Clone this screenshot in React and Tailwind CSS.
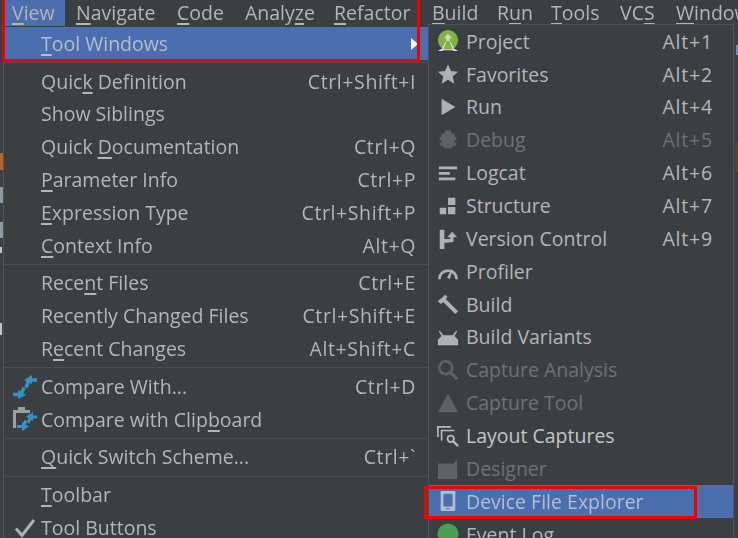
import React from "react";

const FONT = "font-['Open_Sans','Noto_Sans',sans-serif]";

// marks the mnemonic letter of a menu label
function Label({ text, u }) {
  if (u === undefined) return <span>{text}</span>;
  return (
    <span>
      {text.slice(0, u)}
      <span className="underline underline-offset-[3px] decoration-[1.5px]">{text[u]}</span>
      {text.slice(u + 1)}
    </span>
  );
}

const Svg = ({ children, className = "w-[22px] h-[22px]" }) => (
  <svg viewBox="0 0 24 24" className={`shrink-0 ${className}`}>
    {children}
  </svg>
);

const icons = {
  compare: (
    <Svg className="w-6 h-6">
      <path d="M24 5h-8l-3 7.500" fill="none" stroke="#3592c4" strokeWidth="3.500" />
      <path d="M19 0v9l-8-4zM5 15v9l8-4z" fill="#3592c4" />
      <path d="M0 19.500h8l3-7" fill="none" stroke="#3592c4" strokeWidth="3.500" />
    </Svg>
  ),
  clipboard: (
    <Svg className="w-6 h-6">
      <path d="M0 3h5V0h7v3h5v3H3v15H0z" fill="#9aa0a4" />
      <path d="M24 10h-6l-3 6" fill="none" stroke="#3592c4" strokeWidth="3" />
      <path d="M20 5v9l-7-4.500zM9 15v9l7-4.500z" fill="#3592c4" />
      <path d="M4 19.500h6l3-6" fill="none" stroke="#3592c4" strokeWidth="3" />
    </Svg>
  ),
  check: (
    <Svg className="w-6 h-6">
      <path d="M3 12.500l6 7L21 4" fill="none" stroke="#afb1b3" strokeWidth="3" />
    </Svg>
  ),
  android: (
    <Svg>
      <circle cx="12" cy="11" r="11" fill="#7fb347" />
      <path d="M12 4l4.500 5H14v3h-4V9H7.500z" fill="#c9d8bb" />
      <path d="M1 23l3-2h1l4-8h1l-3 8h10l-3-8h1l4 8h1l3 2h-5l-1-1H7l-1 1z" fill="#dfe3da" />
    </Svg>
  ),
  star: (
    <Svg>
      <path d="M12 1.500l3.200 7.300 7.800.7-5.900 5.200 1.800 7.800-6.900-4.100-6.900 4.100 1.800-7.800L1 9.500l7.800-.7z" fill="#afb1b3" />
    </Svg>
  ),
  play: (
    <Svg>
      <path d="M5 3l15 9-15 9z" fill="#afb1b3" />
    </Svg>
  ),
  bug: (
    <Svg>
      <path d="M8 5a4 4 0 018 0l3 0v3l2 1v3h-2v3h2v3h-3l-2 3H8l-2-3H3v-3h2v-3H3V9l2-1V5z" fill="#5f6163" />
    </Svg>
  ),
  logcat: (
    <Svg>
      <path d="M2 5h20v3H2zM2 11h12v3H2zM2 17h18v3H2z" fill="#afb1b3" />
    </Svg>
  ),
  structure: (
    <Svg>
      <path d="M12 3h8v8h-8zM12 13h8v8h-8zM3 14h7v7H3z" fill="#afb1b3" />
    </Svg>
  ),
  vcs: (
    <Svg>
      <path d="M3 2h5v21H3zM8 16h4l6-1v-5h4l-5.500-6L11 10h3.500v2H8z" fill="#afb1b3" />
    </Svg>
  ),
  profiler: (
    <Svg>
      <path d="M1 21a11 11 0 0122 0h-3a8 8 0 00-16 0z" fill="#afb1b3" />
      <path d="M11 19l5-9 1 1-3 10z" fill="#afb1b3" />
    </Svg>
  ),
  hammer: (
    <Svg>
      <path d="M1 9l8-7 2.500 2-2 2.500L23 20l-3 3L7 10 4 12z" fill="#afb1b3" />
    </Svg>
  ),
  head: (
    <Svg>
      <path d="M1 21v-6l4-4-3-5 1-1 4 5h10l4-5 1 1-3 5 4 4v6z" fill="#afb1b3" />
    </Svg>
  ),
  search: (
    <Svg>
      <circle cx="9.500" cy="9.500" r="7" fill="none" stroke="#5f6163" strokeWidth="3" />
      <path d="M14 14l8 8" stroke="#5f6163" strokeWidth="3.500" />
    </Svg>
  ),
  warning: (
    <Svg>
      <path d="M12 2l11 20H1z" fill="#5f6163" />
    </Svg>
  ),
  layout: (
    <Svg>
      <path d="M1 13V2h14M5 17V6h14" fill="none" stroke="#b8babc" strokeWidth="1.800" />
      <circle cx="15" cy="15" r="3.500" fill="none" stroke="#b8babc" strokeWidth="2" />
      <path d="M18 18l5 5" stroke="#b8babc" strokeWidth="2.500" />
    </Svg>
  ),
  designer: (
    <Svg>
      <path d="M1 6h17l4-4v21H1z" fill="#5f6163" />
    </Svg>
  ),
  device: (
    <Svg>
      <path d="M5 1h14a1 1 0 011 1v20a1 1 0 01-1 1H5a1 1 0 01-1-1V2a1 1 0 011-1zM7 4v14h10V4zM10 20v1h4v-1z" fill="#b4bdd2" fillRule="evenodd" />
    </Svg>
  ),
  green: (
    <Svg>
      <circle cx="12" cy="12" r="11.500" fill="#499c54" />
    </Svg>
  ),
};

const menuBar = [
  ["View", 0, "w-[61px] pl-[8px] bg-[#4b6eaf]"],
  ["Navigate", 0, "w-[101px] pl-[11px]"],
  ["Code", 0, "w-[68px] pl-[11px]"],
  ["Analyze", 5, "w-[89px] pl-[11px]"],
  ["Refactor", 0, "w-[98px] pl-[11px]"],
  ["Build", 0, "w-[65px] pl-[11px]"],
  ["Run", 1, "w-[54px] pl-[11px]"],
  ["Tools", 0, "w-[69px] pl-[11px]"],
  ["VCS", 2, "w-[56px] pl-[11px]"],
  ["Window", 0, "pl-[11px]"],
];

const viewGroups = [
  [
    ["Quick Definition", 4, "Ctrl+Shift+I"],
    ["Show Siblings"],
    ["Quick Documentation", 6, "Ctrl+Q"],
    ["Parameter Info", 0, "Ctrl+P"],
    ["Expression Type", 0, "Ctrl+Shift+P"],
    ["Context Info", 0, "Alt+Q"],
  ],
  [
    ["Recent Files", 4, "Ctrl+E"],
    ["Recently Changed Files", undefined, "Ctrl+Shift+E"],
    ["Recent Changes", 1, "Alt+Shift+C"],
  ],
  [
    ["Compare With...", undefined, "Ctrl+D", "compare"],
    ["Compare with Clipboard", 17, "", "clipboard"],
  ],
  [["Quick Switch Scheme...", 0, "Ctrl+`"]],
  [
    ["Toolbar", 0],
    ["Tool Buttons", 0, "", "check"],
  ],
];

const toolWindows = [
  ["Project", "Alt+1", "android"],
  ["Favorites", "Alt+2", "star"],
  ["Run", "Alt+4", "play"],
  ["Debug", "Alt+5", "bug", "off"],
  ["Logcat", "Alt+6", "logcat"],
  ["Structure", "Alt+7", "structure"],
  ["Version Control", "Alt+9", "vcs"],
  ["Profiler", "", "profiler"],
  ["Build", "", "hammer"],
  ["Build Variants", "", "head"],
  ["Capture Analysis", "", "search", "off"],
  ["Capture Tool", "", "warning", "off"],
  ["Layout Captures", "", "layout", "bright"],
  ["Designer", "", "designer", "off"],
  ["Device File Explorer", "", "device", "sel"],
  ["Event Log", "", "green"],
];

function ViewRow({ label, u, keys, icon }) {
  return (
    <div className="flex items-center h-[32.8px] pr-[12px]">
      <div className="w-[37px] flex justify-center pl-[5px]">{icon && icons[icon]}</div>
      <div className="flex-1">
        <Label text={label} u={u} />
      </div>
      {keys && <div className="tracking-[0.6px]">{keys}</div>}
    </div>
  );
}

function ToolRow({ label, keys, icon, state }) {
  const tone =
    state === "off"
      ? "text-[#6f7173]"
      : state === "bright"
        ? "text-[#c4c6c8]"
        : state === "sel"
          ? "text-[#b4bdd2] bg-[#4b6eaf]"
          : "";
  return (
    <div className={`flex items-center h-[32.87px] ${tone}`}>
      <div className="w-[37px] flex justify-center">{icons[icon]}</div>
      <div className="flex-1">{label}</div>
      {keys && <div className="pr-[20px] tracking-[0.8px]">{keys}</div>}
    </div>
  );
}

export default function App() {
  return (
    <div className={`relative w-[738px] h-[538px] overflow-hidden bg-[#3c3f41] text-[#b4b6b8] text-[19.500px] leading-none ${FONT}`}>
      <div className="blur-[0.4px]">
        {/* menu bar */}
        <div className="flex h-[26px] ml-[4px]">
          {menuBar.map(([name, u, cls]) => (
            <div key={name} className={`flex items-center shrink-0 ${cls}`}>
              <Label text={name} u={u} />
            </div>
          ))}
        </div>

        {/* View menu */}
        <div className="mt-[1px] ml-[3px] w-[425px] border-l border-[#515456]">
          <div className="flex items-center h-[33px] bg-[#4b6eaf] text-[#b4bdd2]">
            <div className="pl-[37px]">
              <Label text="Tool Windows" u={0} />
            </div>
          </div>
          {viewGroups.map((group, i) => (
            <div key={i} className="border-t-[1.500px] border-[#4b4e50] mt-[2px] pt-[2px] first:border-t-0 first:mt-[4.500px] first:pt-0">
              {group.map(([label, u, keys, icon]) => (
                <ViewRow key={label} label={label} u={u} keys={keys} icon={icon} />
              ))}
            </div>
          ))}
        </div>
      </div>

      {/* bits of the editor showing beside the menus */}
      <div className="absolute left-0 top-[153px] w-[3px] h-[17px] bg-[#b5652b]" />
      <div className="absolute left-0 top-[187px] w-[3px] h-[16px] bg-[#8d9aa1]" />
      <div className="absolute left-0 top-[222px] w-[3px] h-[16px] bg-[#8d9aa1]" />
      <div className="absolute left-0 top-[247px] w-[2px] h-[6px] bg-[#c4c6c8]" />
      <div className="absolute left-0 top-[323px] w-[2px] h-[12px] bg-[#c4c6c8]" />
      <div className="absolute right-0 top-[45px] w-[2px] h-[10px] bg-[#5a93c8]" />
      <div className="absolute right-0 top-[142px] w-[3px] h-[30px] bg-[#4a463c]" />

      {/* submenu arrow */}
      <div className="absolute left-[411px] top-[38px] w-0 h-0 border-y-[6px] border-y-transparent border-l-[7px] border-l-white" />

      {/* Tool Windows submenu */}
      <div className="absolute left-[428px] top-[24px] w-[306px] h-[520px] bg-[#3c3f41] border border-[#515456] blur-[0.4px]">
        {toolWindows.map(([label, keys, icon, state]) => (
          <ToolRow key={label} label={label} keys={keys} icon={icon} state={state} />
        ))}
      </div>

      {/* red annotation boxes */}
      <div className="absolute left-[2px] top-[-6px] w-[418px] h-[68px] border-[3px] border-[#f00000]" />
      <div className="absolute left-[424px] top-[486px] w-[273px] h-[33px] border-[3px] border-[#f00000]" />
    </div>
  );
}
